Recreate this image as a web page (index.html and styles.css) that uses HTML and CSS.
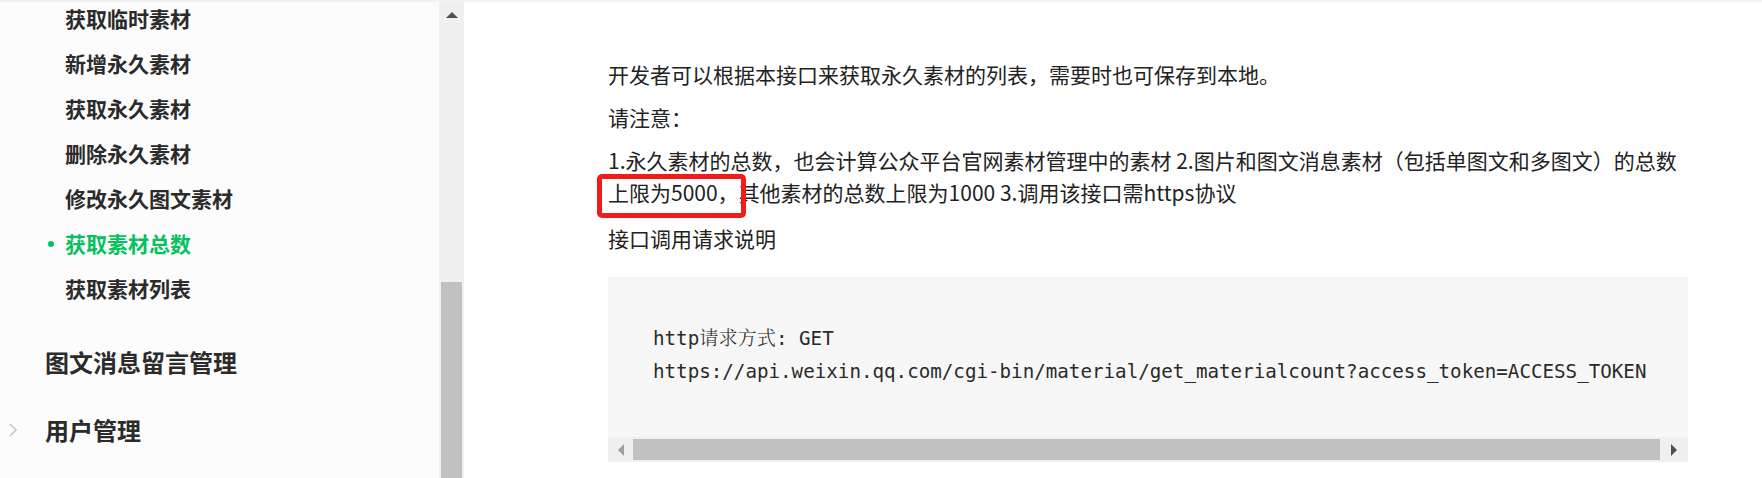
FILE: index.html
```html
<!DOCTYPE html>
<html lang="zh-CN">
<head>
<meta charset="utf-8">
<title>获取素材总数</title>
<link rel="stylesheet" href="styles.css">
</head>
<body>
<div class="page">
  <aside class="sidebar">
    <nav class="nav">
      <ul class="sub-list">
        <li class="sub-item">获取临时素材</li>
        <li class="sub-item">新增永久素材</li>
        <li class="sub-item">获取永久素材</li>
        <li class="sub-item">删除永久素材</li>
        <li class="sub-item">修改永久图文素材</li>
        <li class="sub-item active">获取素材总数</li>
        <li class="sub-item">获取素材列表</li>
      </ul>
      <div class="group-title">图文消息留言管理</div>
      <div class="group-title has-arrow">
        <svg class="chevron" width="10" height="16" viewBox="0 0 10 16"><path d="M2 2 L8 8 L2 14" fill="none" stroke="#c4c4c4" stroke-width="1.6"/></svg>
        用户管理
      </div>
    </nav>
    <div class="vscroll">
      <div class="vscroll-btn"><svg width="12" height="8" viewBox="0 0 12 8"><path d="M0 7 L6 1 L12 7 Z" fill="#505050"/></svg></div>
      <div class="vscroll-space"></div>
      <div class="vscroll-thumb"></div>
    </div>
  </aside>
  <main class="main">
    <article class="content">
      <p class="para">开发者可以根据本接口来获取永久素材的列表，需要时也可保存到本地。</p>
      <p class="para">请注意：</p>
      <p class="para">1.永久素材的总数，也会计算公众平台官网素材管理中的素材 2.图片和图文消息素材（包括单图文和多图文）的总数<br><span class="mark">上限为5000，</span>其他素材的总数上限为1000 3.调用该接口需https协议</p>
      <p class="para para-last">接口调用请求说明</p>
      <div class="code-block">
        <pre class="code">http<span class="code-cn">请求方式</span>: GET
https://api.weixin.qq.com/cgi-bin/material/get_materialcount?access_token=ACCESS_TOKEN</pre>
        <div class="hscroll">
          <div class="hscroll-btn left"><svg width="8" height="12" viewBox="0 0 8 12"><path d="M7 0 L1 6 L7 12 Z" fill="#a0a0a0"/></svg></div>
          <div class="hscroll-thumb"></div>
          <div class="hscroll-btn right"><svg width="8" height="12" viewBox="0 0 8 12"><path d="M1 0 L7 6 L1 12 Z" fill="#505050"/></svg></div>
        </div>
      </div>
    </article>
  </main>
</div>
</body>
</html>
```
FILE: styles.css
```css
* { box-sizing: border-box; }
html, body { margin: 0; padding: 0; }
body {
  background: #ffffff;
  font-family: "Noto Sans CJK SC", "Noto Sans", sans-serif;
  color: #222;
  width: 1762px;
  height: 478px;
  overflow: hidden;
}
.page {
  display: flex;
  height: 478px;
  border-top: 2px solid #f2f2f2;
}
.sidebar {
  width: 464px;
  flex: none;
  display: flex;
  background: #fcfcfc;
  height: 100%;
}
.nav {
  flex: 1;
  overflow: hidden;
}
.sub-list {
  list-style: none;
  margin: -6px 0 0 0;
  padding: 0 0 17px 65px;
}
.sub-item {
  height: 45px;
  line-height: 45px;
  font-size: 21px;
  font-weight: 700;
  color: #2b2b2b;
  position: relative;
}
.sub-item.active { color: #07c160; }
.sub-item.active::before {
  content: "";
  position: absolute;
  left: -17px;
  top: 20px;
  width: 6px;
  height: 6px;
  border-radius: 50%;
  background: #07c160;
}
.group-title {
  height: 68px;
  line-height: 68px;
  padding-left: 45px;
  font-size: 24px;
  font-weight: 700;
  color: #2b2b2b;
  position: relative;
}
.chevron {
  position: absolute;
  left: 8px;
  top: 26px;
}
.vscroll {
  width: 25px;
  flex: none;
  background: #f0f0f0;
  display: flex;
  flex-direction: column;
  align-items: center;
}
.vscroll-btn {
  height: 25px;
  display: flex;
  align-items: center;
  justify-content: center;
  width: 100%;
}
.vscroll-space { height: 255px; }
.vscroll-thumb {
  flex: 1;
  width: 21px;
  background: #c1c1c1;
}
.main {
  flex: 1;
  padding: 56px 0 0 144px;
}
.content {
  width: 1080px;
}
.para {
  margin: 0 0 11px 0;
  font-size: 21px;
  line-height: 32px;
  color: #222;
}
.para-last {
  margin-top: 14px;
}
.mark {
  position: relative;
}
.mark::after {
  content: "";
  position: absolute;
  left: -11px;
  right: -7px;
  top: -3px;
  bottom: -11px;
  border: 5px solid #f01c1c;
  border-radius: 5px;
}
.code-block {
  margin-top: 23px;
  background: #f7f7f7;
  width: 1080px;
}
.code {
  margin: 0;
  padding: 43px 0 49px 45px;
  font-family: "DejaVu Sans Mono", "Liberation Mono", monospace;
  font-size: 19.2px;
  line-height: 33px;
  color: #2a2a2a;
  white-space: pre;
  overflow: hidden;
}
.code-cn {
  font-family: "Noto Serif CJK SC", "Noto Sans CJK SC", serif;
  font-weight: 300;
}
.hscroll {
  display: flex;
  height: 25px;
  background: #f0f0f0;
  align-items: center;
}
.hscroll-btn {
  height: 25px;
  display: flex;
  align-items: center;
  justify-content: center;
}
.hscroll-btn.left { width: 25px; }
.hscroll-btn.right { width: 28px; }
.hscroll-thumb {
  flex: 1;
  height: 21px;
  background: #c1c1c1;
}
```
